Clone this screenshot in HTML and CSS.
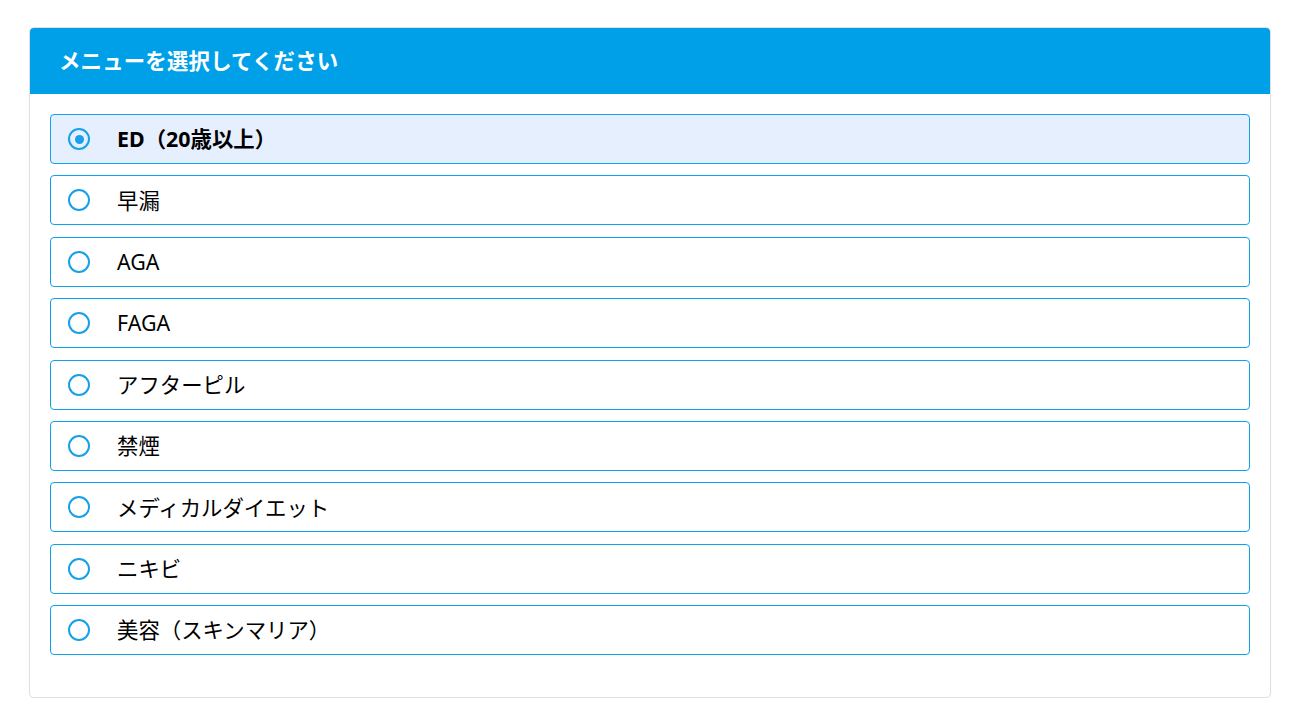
FILE: index.html
```html
<!DOCTYPE html>
<html lang="ja">
<head>
<meta charset="utf-8">
<link rel="stylesheet" href="styles.css">
</head>
<body>
<div class="page">
  <section class="card">
    <header class="card-head">メニューを選択してください</header>
    <div class="list">
      <label class="item selected"><span class="radio"></span><span class="label">ED（20歳以上）</span></label>
      <label class="item"><span class="radio"></span><span class="label">早漏</span></label>
      <label class="item"><span class="radio"></span><span class="label">AGA</span></label>
      <label class="item"><span class="radio"></span><span class="label">FAGA</span></label>
      <label class="item"><span class="radio"></span><span class="label">アフターピル</span></label>
      <label class="item"><span class="radio"></span><span class="label">禁煙</span></label>
      <label class="item"><span class="radio"></span><span class="label">メディカルダイエット</span></label>
      <label class="item"><span class="radio"></span><span class="label">ニキビ</span></label>
      <label class="item"><span class="radio"></span><span class="label">美容（スキンマリア）</span></label>
    </div>
  </section>
</div>
</body>
</html>
```

FILE: styles.css
```css
html, body {
  margin: 0;
  padding: 0;
  background: #ffffff;
}
body {
  font-family: "Noto Sans", "Noto Sans CJK JP", sans-serif;
  color: #000;
}
.page {
  padding: 27px 31px 0 29px;
}
.card {
  border: 1px solid #e0e0e0;
  border-radius: 5px;
  background: #fff;
  overflow: hidden;
  box-shadow: 0 1px 2px rgba(0, 0, 0, 0.04);
}
.card-head {
  box-sizing: border-box;
  background: #00a0e9;
  color: #fff;
  font-weight: 700;
  font-size: 21.4px;
  height: 66px;
  display: flex;
  align-items: center;
  padding: 0 0 3px 29px;
  letter-spacing: 0.2px;
}
.list {
  display: flex;
  flex-direction: column;
  gap: 11.375px;
  padding: 20px 20px 42px 20px;
}
.item {
  box-sizing: border-box;
  height: 50px;
  border: 1px solid #0ea2ec;
  border-radius: 4px;
  background: #fff;
  display: flex;
  align-items: center;
  padding-left: 17px;
  font-size: 21.4px;
}
.item.selected {
  background: #e5effd;
  font-weight: 700;
}
.radio {
  box-sizing: border-box;
  width: 22px;
  height: 22px;
  border: 2.5px solid #18a0e8;
  border-radius: 50%;
  display: flex;
  align-items: center;
  justify-content: center;
  margin-right: 27px;
  flex: none;
}
.item.selected .radio::after {
  content: "";
  width: 9px;
  height: 9px;
  border-radius: 50%;
  background: #18a0e8;
}
.label {
  line-height: 1;
}
```
